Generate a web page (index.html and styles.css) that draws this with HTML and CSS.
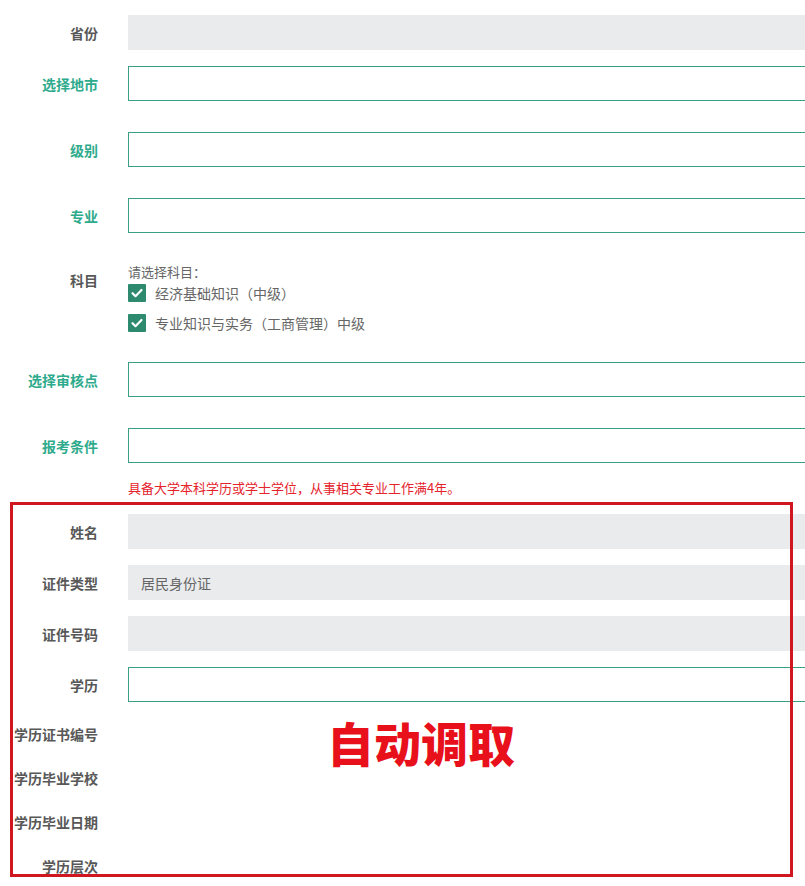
FILE: index.html
```html
<!DOCTYPE html>
<html lang="zh-CN">
<head>
    <meta charset="UTF-8">
    <meta name="viewport" content="width=device-width, initial-scale=1.0">
    <title>报名信息</title>
    <link rel="stylesheet" href="styles.css">
</head>
<body>
    <form class="apply-form">
        <div class="row">
            <label class="label">省份</label>
            <div class="field readonly"></div>
        </div>
        <div class="row wide">
            <label class="label req">选择地市</label>
            <div class="field"></div>
        </div>
        <div class="row wide">
            <label class="label req">级别</label>
            <div class="field"></div>
        </div>
        <div class="row wide">
            <label class="label req">专业</label>
            <div class="field"></div>
        </div>
        <div class="row subjects">
            <label class="label">科目</label>
            <div class="subject-list">
                <div class="hint">请选择科目：</div>
                <div class="check"><span class="box"><svg viewBox="0 0 18 18" width="18" height="18"><path d="M4.5 9.2l3 3 6-6.2" fill="none" stroke="#fff" stroke-width="2.2" stroke-linecap="round" stroke-linejoin="round"/></svg></span>经济基础知识（中级）</div>
                <div class="check"><span class="box"><svg viewBox="0 0 18 18" width="18" height="18"><path d="M4.5 9.2l3 3 6-6.2" fill="none" stroke="#fff" stroke-width="2.2" stroke-linecap="round" stroke-linejoin="round"/></svg></span>专业知识与实务（工商管理）中级</div>
            </div>
        </div>
        <div class="row wide">
            <label class="label req">选择审核点</label>
            <div class="field"></div>
        </div>
        <div class="row">
            <label class="label req">报考条件</label>
            <div class="field"></div>
        </div>
        <p class="condition">具备大学本科学历或学士学位，从事相关专业工作满4年。</p>

        <div class="row">
            <label class="label">姓名</label>
            <div class="field readonly"></div>
        </div>
        <div class="row">
            <label class="label">证件类型</label>
            <div class="field readonly">居民身份证</div>
        </div>
        <div class="row">
            <label class="label">证件号码</label>
            <div class="field readonly"></div>
        </div>
        <div class="row">
            <label class="label">学历</label>
            <div class="field"></div>
        </div>
        <div class="text-rows">
            <div class="row text-row">
                <label class="label">学历证书编号</label>
            </div>
            <div class="row text-row">
                <label class="label">学历毕业学校</label>
            </div>
            <div class="row text-row">
                <label class="label">学历毕业日期</label>
            </div>
            <div class="row text-row">
                <label class="label">学历层次</label>
            </div>
        </div>
    </form>

    <!-- annotation over the auto-filled part -->
    <div class="auto-box"></div>
    <div class="auto-tag">自动调取</div>
</body>
</html>
```

FILE: styles.css
```css
body {
    margin: 0;
    padding: 0;
    background: #fff;
    font-family: "Microsoft YaHei", "Noto Sans CJK SC", "Noto Sans", sans-serif;
    color: #666;
    overflow: hidden;
}
.apply-form {
    padding-top: 15px;
}
.row {
    display: flex;
    align-items: center;
    margin-bottom: 16px;
}
.row.wide {
    margin-bottom: 31px;
}
.label {
    width: 98px;
    flex: none;
    margin-right: 30px;
    text-align: right;
    font-size: 14px;
    font-weight: bold;
    color: #585858;
    white-space: nowrap;
}
.label.req {
    color: #2eaa8c;
}
/* the inputs run on past the right edge of the window */
.field {
    flex: 1;
    height: 35px;
    box-sizing: border-box;
    border: 1px solid #3a9f84;
    border-right: none;
    background: #fff;
    display: flex;
    align-items: center;
    padding-left: 12px;
    font-size: 14px;
    color: #666;
}
.field.readonly {
    border: none;
    background: #e9ebed;
    padding-left: 13px;
}

/* subjects */
.row.subjects {
    align-items: flex-start;
    margin-top: -1px;
    margin-bottom: 30px;
}
.subjects .label {
    padding-top: 7px;
}
.hint {
    font-size: 13px;
    line-height: 18px;
    color: #666;
    height: 21px;
}
.check {
    display: flex;
    align-items: center;
    font-size: 14px;
    color: #666;
    height: 18px;
    margin-bottom: 12px;
}
.check:last-child {
    margin-bottom: 0;
}
.box {
    width: 18px;
    height: 18px;
    background: #2d8a6f;
    border-radius: 1px;
    margin-right: 9px;
    display: inline-flex;
}
.condition {
    margin: 16px 0 17px 128px;
    font-size: 13px;
    line-height: 18px;
    color: #e5232c;
}
.text-rows {
    padding-top: 6px;
}
.row.text-row {
    height: 20px;
    margin-bottom: 24px;
}
.row.text-row .label {
    line-height: 20px;
}

/* annotation overlay */
.auto-box {
    position: absolute;
    left: 10px;
    top: 502px;
    width: 777px;
    height: 369px;
    border: 3px solid #d0161e;
}
.auto-tag {
    position: absolute;
    left: 327px;
    top: 714px;
    font-size: 47px;
    line-height: 56px;
    font-weight: 900;
    color: #e8101b;
}
```
